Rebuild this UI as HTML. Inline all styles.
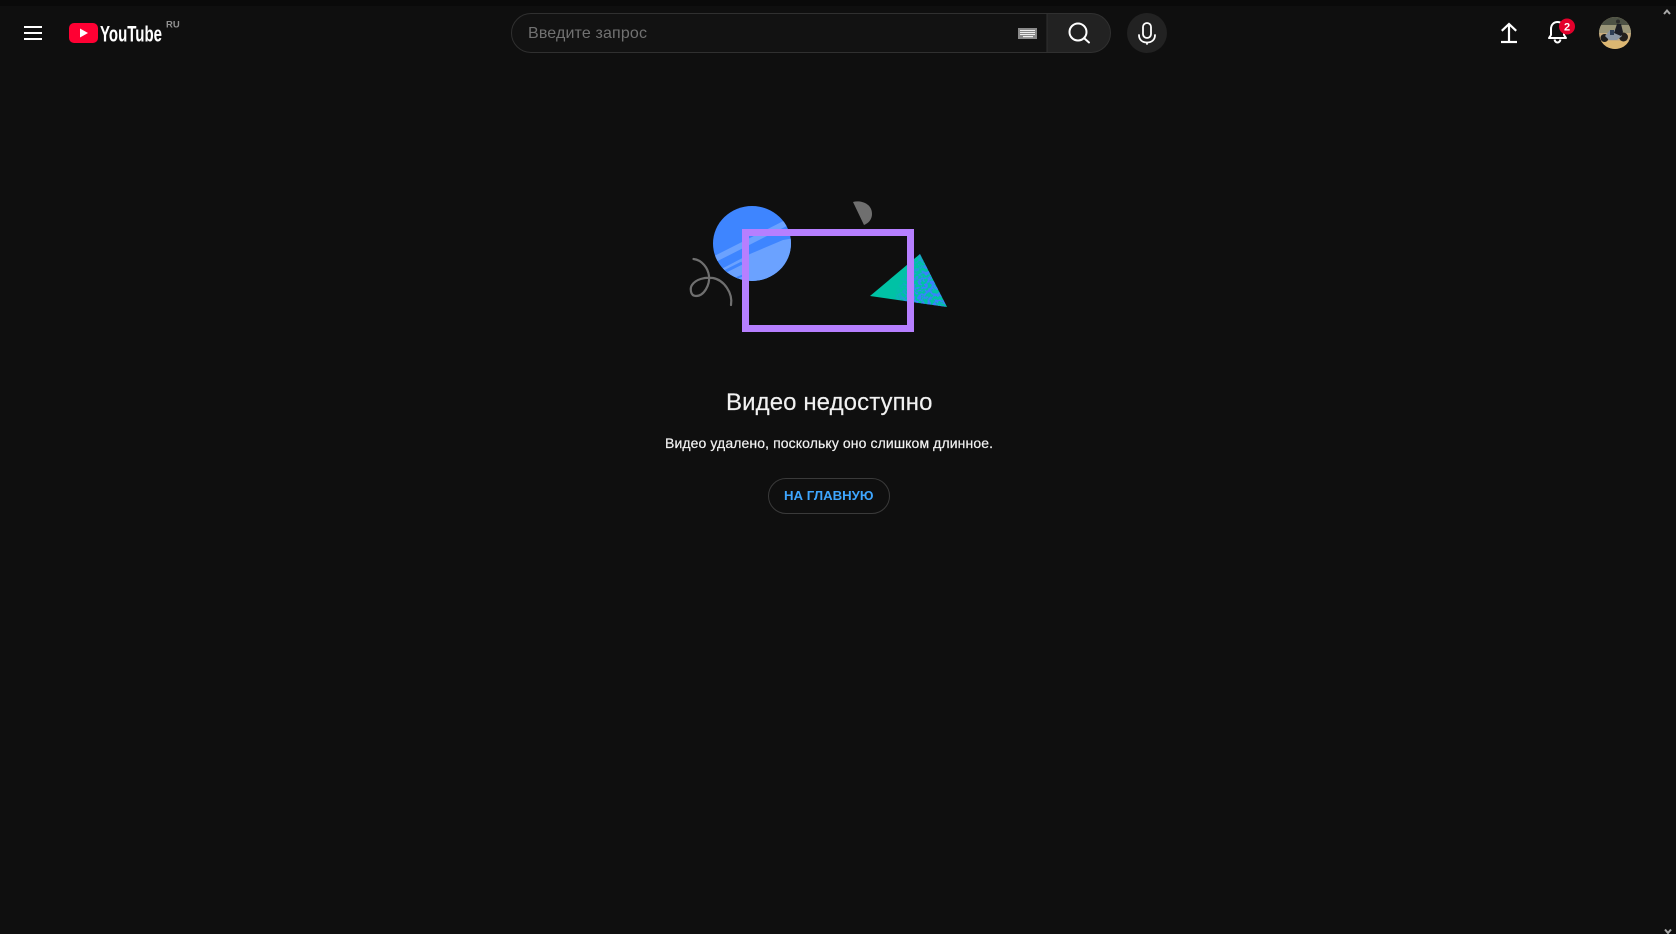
<!DOCTYPE html>
<html lang="ru">
<head>
<meta charset="utf-8">
<title>Видео недоступно</title>
<style>
html,body{margin:0;padding:0;width:1676px;height:934px;overflow:hidden;background:#0f0f0f;}
body{position:relative;font-family:"Liberation Sans",sans-serif;}
svg.full{position:absolute;left:0;top:0;}
.t{position:absolute;white-space:nowrap;}
</style>
</head>
<body>
<svg class="full" width="1676" height="934" viewBox="0 0 1676 934" xmlns="http://www.w3.org/2000/svg">
<defs>
<clipPath id="cc"><ellipse cx="752" cy="243.500" rx="39" ry="37.500"/></clipPath>
<clipPath id="tc"><polygon points="870,296 920,254 947,307"/></clipPath>
<clipPath id="av"><circle cx="1615" cy="33" r="16"/></clipPath>
<filter id="sp" x="0" y="0" width="100%" height="100%" color-interpolation-filters="sRGB">
<feTurbulence type="fractalNoise" baseFrequency="0.32" numOctaves="2" seed="7"/>
<feColorMatrix type="matrix" values="0 0 0 0 0.23  0 0 0 0 0.5  0 0 0 0 1  9 0 0 0 -4.100"/>
</filter>
<linearGradient id="fade" x1="0" y1="0" x2="1" y2="0.5"><stop offset="0.25" stop-color="#000"/><stop offset="0.55" stop-color="#fff"/></linearGradient>
<mask id="tm" maskUnits="userSpaceOnUse" x="860" y="250" width="95" height="65"><polygon points="895,250 955,250 955,315 895,315" fill="url(#fade)"/></mask>
</defs>
<rect width="1676" height="6" fill="#0a0a0a"/>

<!-- hamburger -->
<g fill="#fff"><rect x="24" y="26" width="18" height="2"/><rect x="24" y="32" width="18" height="2"/><rect x="24" y="38" width="18" height="2"/></g>

<!-- logo -->
<rect x="69" y="23" width="29" height="20" rx="5" fill="#ff0033"/>
<polygon points="80,28.500 88,33 80,37.500" fill="#fff"/>
<text x="100" y="41.500" font-family="Liberation Sans" font-size="22" font-weight="700" fill="#fff" textLength="62" lengthAdjust="spacingAndGlyphs">YouTube</text>
<text x="166" y="27.500" font-family="Liberation Sans" font-size="9.500" font-weight="700" fill="#909090">RU</text>

<!-- search -->
<path d="M1047 13.500H531a19.500 19.500 0 0 0 0 39H1047z" fill="#121212" stroke="#303030"/>
<path d="M1047 13.500H1091a19.500 19.500 0 0 1 0 39H1047z" fill="#222" stroke="#303030"/>
<rect x="1018" y="28" width="19" height="11" fill="#8a8a8a"/>
<g fill="#eee"><rect x="1020" y="30" width="15" height="1"/><rect x="1020" y="32" width="15" height="1"/><rect x="1020" y="34" width="15" height="1"/><rect x="1023" y="36" width="10" height="1.200"/></g>
<g fill="none" stroke="#fff" stroke-width="2" stroke-linecap="round"><circle cx="1078" cy="32" r="8.500"/><path d="M1084.500 38.500l4.500 4"/></g>

<!-- mic -->
<circle cx="1147" cy="33" r="20" fill="#222"/>
<g fill="none" stroke="#fff" stroke-width="1.800" stroke-linecap="round">
<rect x="1143" y="23" width="8" height="15" rx="4"/>
<path d="M1139 35c0 5 3.500 7.500 8 7.500s8-2.500 8-7.500M1147 42.500v1.500"/>
</g>

<!-- upload -->
<g fill="none" stroke="#fff" stroke-width="2.200"><path d="M1509 41V24.500M1501.800 30.800L1509 24L1516.200 30.800"/><path d="M1501 42h16"/></g>

<!-- bell -->
<g fill="none" stroke="#fff" stroke-width="2" stroke-linejoin="round">
<path d="M1549 38h17l-2-3v-6c0-4.500-3-7-6.500-7s-6.500 2.500-6.500 7v6z"/>
<path d="M1554.500 39.500c.5 2 1.500 3 3 3s2.500-1 3-3"/>
</g>
<circle cx="1567" cy="26.500" r="8" fill="#e3002b"/>
<text x="1567" y="30.500" font-family="Liberation Sans" font-size="11" font-weight="700" fill="#fff" text-anchor="middle">2</text>

<!-- avatar -->
<g clip-path="url(#av)">
<rect x="1599" y="17" width="32" height="32" fill="#c9ad7e"/>
<rect x="1599" y="17" width="32" height="8" fill="#4d5245"/>
<rect x="1599" y="25" width="32" height="8" fill="#9a9678"/>
<rect x="1599" y="41" width="32" height="8" fill="#dcb772"/>
<circle cx="1604.500" cy="38" r="4" fill="#1c1c1c"/>
<circle cx="1623.500" cy="37" r="4.500" fill="#221f1c"/>
<path d="M1605 36l5-6h9l3 6-5 4h-8z" fill="#8b96a3"/>
<path d="M1614 33l3-9h4l2 8-2 4z" fill="#1b1d24"/>
<circle cx="1618" cy="21.500" r="2" fill="#2a2a2a"/>
<rect x="1610" y="30" width="4" height="5" fill="#2f3f55"/>
</g>

<!-- scroll arrows -->
<path d="M1664 14l3-3.500 3 3.500" fill="none" stroke="#a9a9a9" stroke-width="2"/>
<path d="M1665 929.500l3 3.500 3-3.500" fill="none" stroke="#a9a9a9" stroke-width="2"/>

<!-- illustration -->
<ellipse cx="752" cy="243.500" rx="39" ry="37.500" fill="#3e85ff"/>
<g clip-path="url(#cc)">
<polygon points="712,274 750,254 783,240 795,238 795,290 712,290" fill="#6ba2ff"/>
<path d="M715 259L790 221" stroke="#6ba2ff" stroke-width="6" fill="none"/>
<path d="M722 273L742 263" stroke="#3e85ff" stroke-width="3" fill="none"/>
<path d="M734 279L744 275" stroke="#3e85ff" stroke-width="2" fill="none"/>
</g>
<path d="M853 202C860 200 872 203 872 214C872 219 869 223 864 225Z" fill="#6f6f6f"/>
<path d="M693.500 259C702 260 708 268 709 276C710 285 704 296 696 296C690 296 690 288 692 285C696 279 705 277 713 278C724 280 733 293 731 305" fill="none" stroke="#6f6f6f" stroke-width="2.200" stroke-linecap="round"/>
<polygon points="870,296 920,254 947,307" fill="#00c2a5"/>
<g clip-path="url(#tc)"><g mask="url(#tm)"><rect x="860" y="250" width="95" height="65" filter="url(#sp)"/></g></g>
<rect x="745.500" y="232.500" width="165" height="96" fill="none" stroke="#b67fff" stroke-width="7"/>

<!-- button -->
<rect x="768.500" y="478.500" width="121" height="35" rx="17.500" fill="none" stroke="#3a3a3a"/>
</svg>

<div class="t" style="left:726px;top:389px;font-size:24px;line-height:28px;color:#f1f1f1;letter-spacing:.09px;-webkit-text-stroke:.15px #f1f1f1;">Видео недоступно</div>
<div class="t" style="left:665px;top:435px;font-size:14px;line-height:17px;color:#f1f1f1;letter-spacing:.105px;-webkit-text-stroke:.2px #f1f1f1;">Видео удалено, поскольку оно слишком длинное.</div>
<div class="t" style="left:784px;top:487px;font-size:13.200px;line-height:17px;font-weight:700;color:#3ea6ff;">НА ГЛАВНУЮ</div>
<div class="t" style="left:528px;top:24px;font-size:16px;line-height:20px;color:#717171;letter-spacing:.15px;">Введите запрос</div>
</body>
</html>
